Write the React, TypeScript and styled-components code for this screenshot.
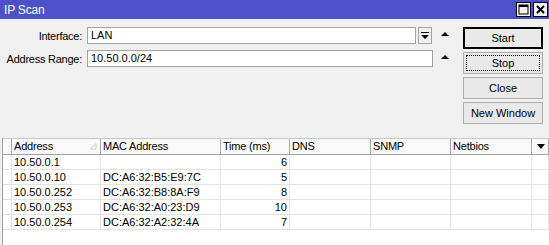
import React from 'react'
import styled, { createGlobalStyle } from 'styled-components'

const GlobalStyle = createGlobalStyle`
    html, body {
        margin: 0;
        padding: 0;
        background: #f0f0f0;
    }
    body {
        font-family: "Liberation Sans", Arial, sans-serif;
        font-size: 11px;
        color: #000;
    }
`

interface ScanRow {
    address: string;
    mac: string;
    time: number;
}

const rows: ScanRow[] = [
    { address: '10.50.0.1', mac: '', time: 6 },
    { address: '10.50.0.10', mac: 'DC:A6:32:B5:E9:7C', time: 5 },
    { address: '10.50.0.252', mac: 'DC:A6:32:B8:8A:F9', time: 8 },
    { address: '10.50.0.253', mac: 'DC:A6:32:A0:23:D9', time: 10 },
    { address: '10.50.0.254', mac: 'DC:A6:32:A2:32:4A', time: 7 },
]

const columns = '9px 89px 120px 69px 81px 80px 81px 1fr'

const App: React.FC = () => {
    return (
        <>
            <GlobalStyle />
            <Window>
                <TitleBar>
                    <Title>IP Scan</Title>
                    <TitleButtons>
                        <TitleBtn>
                            <svg width="11" height="11" viewBox="0 0 11 11">
                                <rect x="1" y="1" width="9" height="9" fill="none" stroke="#000" strokeWidth="1" />
                                <rect x="1" y="1" width="9" height="2" fill="#000" />
                            </svg>
                        </TitleBtn>
                        <TitleBtn>
                            <svg width="11" height="11" viewBox="0 0 11 11">
                                <path d="M2 2 L9 9 M9 2 L2 9" stroke="#000" strokeWidth="2" />
                            </svg>
                        </TitleBtn>
                    </TitleButtons>
                </TitleBar>
                <Form>
                    <Fields>
                        <FieldRow>
                            <Label>Interface:</Label>
                            <Input>LAN</Input>
                            <DropBtn>
                                <svg width="8" height="8" viewBox="0 0 8 8">
                                    <rect x="0" y="0" width="8" height="1" fill="#000" />
                                    <polygon points="0,3 8,3 4,7" fill="#000" />
                                </svg>
                            </DropBtn>
                            <UpArrow $gap={9} />
                        </FieldRow>
                        <FieldRow>
                            <Label>Address Range:</Label>
                            <Input>10.50.0.0/24</Input>
                            <UpArrow $gap={8} />
                        </FieldRow>
                    </Fields>
                    <Buttons>
                        <Button $default>Start</Button>
                        <Button $focused><span>Stop</span></Button>
                        <Button>Close</Button>
                        <Button>New Window</Button>
                    </Buttons>
                </Form>
                <Table>
                    <HeaderRow>
                        <HeadCell />
                        <HeadCell>
                            Address
                            <SortMark>
                                <svg width="7" height="7" viewBox="0 0 7 7">
                                    <polygon points="6,0.5 6,6 0.5,6" fill="#fff" stroke="#c4c4c4" strokeWidth="1" />
                                </svg>
                            </SortMark>
                        </HeadCell>
                        <HeadCell>MAC Address</HeadCell>
                        <HeadCell>Time (ms)</HeadCell>
                        <HeadCell>DNS</HeadCell>
                        <HeadCell>SNMP</HeadCell>
                        <HeadCell>Netbios</HeadCell>
                        <HeadCell $center>
                            <svg width="8" height="5" viewBox="0 0 8 5">
                                <polygon points="0,0 8,0 4,5" fill="#000" />
                            </svg>
                        </HeadCell>
                    </HeaderRow>
                    {rows.map((r) => (
                        <BodyRow key={r.address}>
                            <Cell />
                            <Cell>{r.address}</Cell>
                            <Cell>{r.mac}</Cell>
                            <Cell $right>{r.time}</Cell>
                            <Cell />
                            <Cell />
                            <Cell />
                            <Cell />
                        </BodyRow>
                    ))}
                    <Filler />
                </Table>
            </Window>
        </>
    )
}

const Window = styled.div`
    width: 549px;
    height: 245px;
    display: flex;
    flex-direction: column;
    overflow: hidden;
    background: #f0f0f0;
`
const TitleBar = styled.div`
    height: 19px;
    flex: none;
    background: #4c50c9;
    display: flex;
    align-items: center;
    justify-content: space-between;
    padding: 0 1px 0 4px;
`
const Title = styled.span`
    color: #fff;
    font-size: 12px;
    letter-spacing: -0.2px;
`
const TitleButtons = styled.div`
    display: flex;
    gap: 2px;
`
const TitleBtn = styled.div`
    width: 15px;
    height: 15px;
    box-sizing: border-box;
    border: 1px solid #000;
    background: #f0f0f0;
    display: flex;
    align-items: center;
    justify-content: center;
`
const Form = styled.div`
    display: flex;
    gap: 14px;
    padding: 8px 6px 14px 0;
`
const Fields = styled.div`
    width: 449px;
    display: flex;
    flex-direction: column;
    gap: 6px;
`
const FieldRow = styled.div`
    display: flex;
    align-items: center;
    height: 17px;
`
const Label = styled.div`
    width: 82px;
    margin-right: 5px;
    text-align: right;
    letter-spacing: -0.25px;
    flex: none;
`
const Input = styled.div`
    flex: 1;
    height: 17px;
    box-sizing: border-box;
    border: 1px solid #a3a3a3;
    background: #fff;
    padding: 0 3px;
    line-height: 15px;
`
const DropBtn = styled.div`
    width: 14px;
    height: 17px;
    margin-left: 2px;
    box-sizing: border-box;
    border: 1px solid #a3a3a3;
    background: #f0f0f0;
    display: flex;
    align-items: center;
    justify-content: center;
`
const UpArrow = styled.div<{ $gap: number }>`
    margin-left: ${(p) => p.$gap}px;
    width: 0;
    height: 0;
    border-left: 4px solid transparent;
    border-right: 4px solid transparent;
    border-bottom: 4px solid #000;
    margin-bottom: 4px;
`
const Buttons = styled.div`
    width: 80px;
    display: flex;
    flex-direction: column;
    gap: 3px;
`
const Button = styled.div<{ $default?: boolean; $focused?: boolean }>`
    height: 22px;
    box-sizing: border-box;
    border: 1px solid ${(p) => (p.$default ? '#000' : '#adadad')};
    outline: ${(p) => (p.$default ? '1px solid #000' : 'none')};
    outline-offset: -2px;
    background: #e9e9e9;
    display: flex;
    align-items: center;
    justify-content: center;
    position: relative;
    &::after {
        content: '';
        display: ${(p) => (p.$focused ? 'block' : 'none')};
        position: absolute;
        inset: 2px;
        border: 1px dotted #000;
    }
`
const Table = styled.div`
    flex: 1;
    margin-left: 2px;
    border-left: 1px solid #a0a0a0;
    display: flex;
    flex-direction: column;
    background: #fff;
`
const HeaderRow = styled.div`
    display: grid;
    grid-template-columns: ${columns};
    height: 17px;
    box-sizing: border-box;
    border-top: 1px solid #c8c8c8;
    border-bottom: 1px solid #a0a0a0;
    background: #f9f9f9;
`
const HeadCell = styled.div<{ $center?: boolean }>`
    border-right: 1px solid #a8a8a8;
    padding-left: 2px;
    line-height: 15px;
    position: relative;
    display: flex;
    align-items: center;
    justify-content: ${(p) => (p.$center ? 'center' : 'flex-start')};
    white-space: nowrap;
    letter-spacing: -0.2px;
`
const SortMark = styled.span`
    position: absolute;
    right: 3px;
    top: 4px;
    display: flex;
`
const BodyRow = styled.div`
    display: grid;
    grid-template-columns: ${columns};
    height: 15px;
`
const Cell = styled.div<{ $right?: boolean }>`
    border-right: 1px solid #e3e3e3;
    border-bottom: 1px solid #e3e3e3;
    padding: 0 2px;
    line-height: 14px;
    text-align: ${(p) => (p.$right ? 'right' : 'left')};
    white-space: nowrap;
    overflow: hidden;
`
const Filler = styled.div`
    flex: 1;
    background: #fff;
`

export default App
